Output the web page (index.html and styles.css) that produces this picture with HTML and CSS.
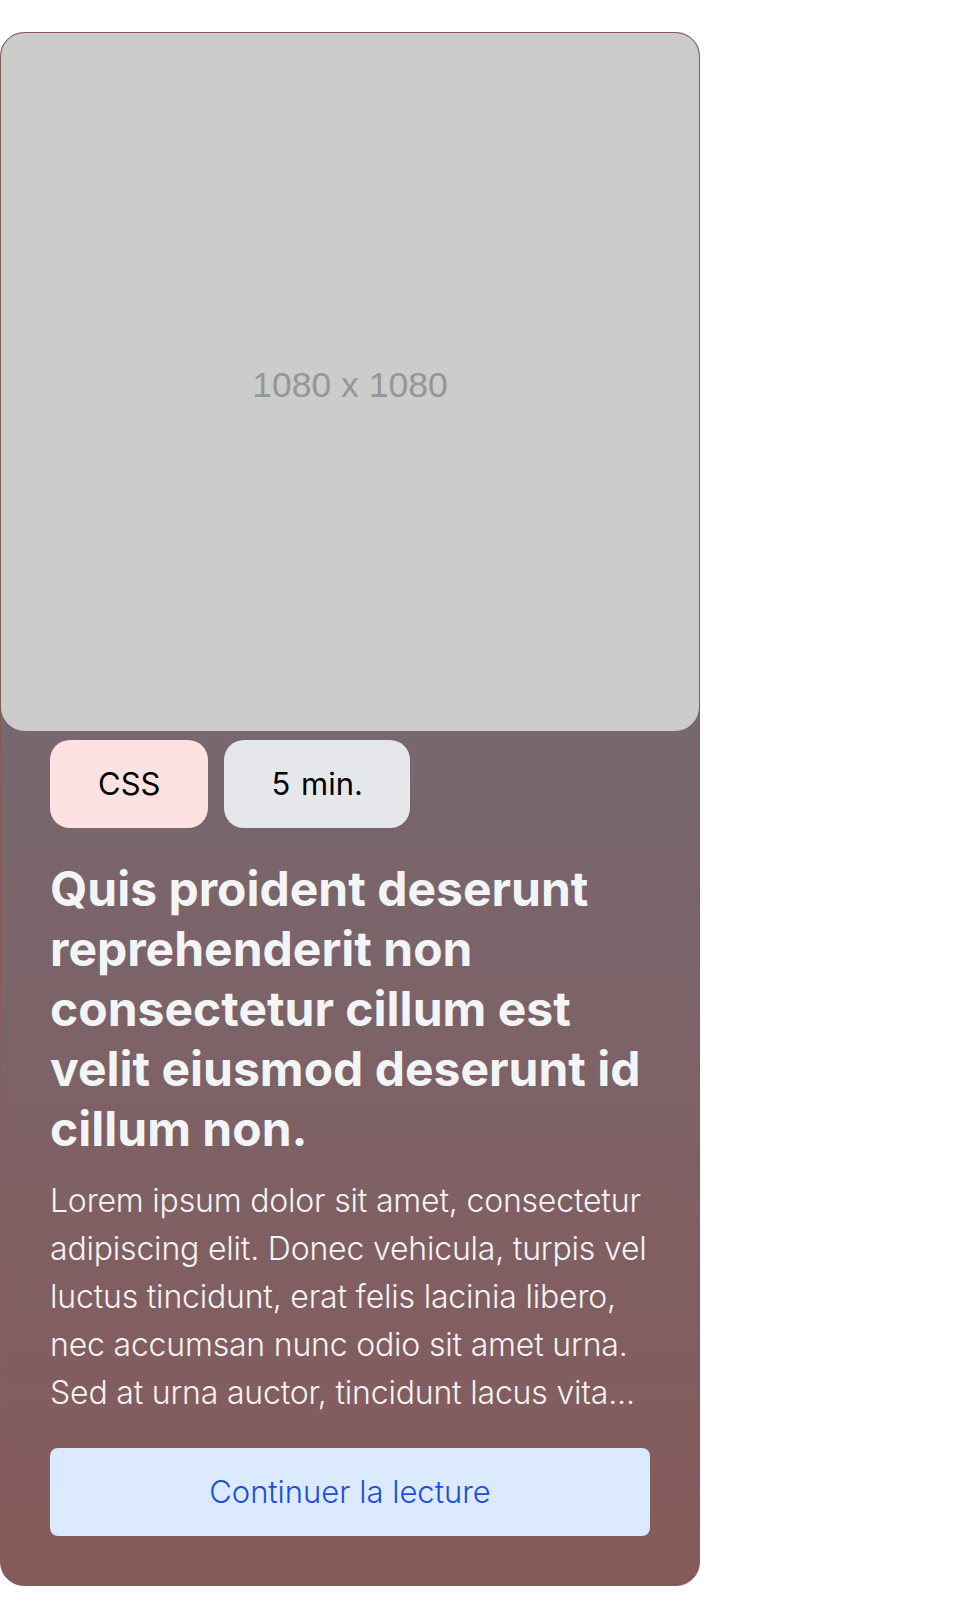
FILE: index.html
```html
<!DOCTYPE html>
<html lang="fr">
<head>
<meta charset="utf-8">
<title>Article</title>
<link rel="stylesheet" href="styles.css">
</head>
<body>
<article class="card">
  <div class="cover"><span class="cover-label">1080 x 1080</span></div>
  <div class="card-body">
    <div class="tags">
      <span class="tag tag-red">CSS</span>
      <span class="tag tag-gray">5 min.</span>
    </div>
    <h2 class="title">Quis proident deserunt reprehenderit non consectetur cillum est velit eiusmod deserunt id cillum non.</h2>
    <p class="excerpt">Lorem ipsum dolor sit amet, consectetur adipiscing elit. Donec vehicula, turpis vel luctus tincidunt, erat felis lacinia libero, nec accumsan nunc odio sit amet urna. Sed at urna auctor, tincidunt lacus vita...</p>
    <a class="btn" href="#">Continuer la lecture</a>
  </div>
</article>
</body>
</html>
```
FILE: styles.css
```css
* { box-sizing: border-box; }
html, body { margin: 0; padding: 0; background: #ffffff; }
body {
  font-family: Inter, "Noto Sans", sans-serif;
  padding-top: 32px;
}
.card {
  width: 700px;
  border: 1px solid #875a5a;
  border-radius: 24px;
  background: linear-gradient(180deg, #6b7280 0%, #865a5a 100%);
  overflow: hidden;
}
.cover {
  width: 100%;
  aspect-ratio: 1 / 1;
  background: #cccccc;
  border-radius: 23px 23px 24px 24px;
  display: flex;
  align-items: center;
  justify-content: center;
  padding-top: 6px;
}
.cover-label {
  font-family: "Liberation Sans", Arial, sans-serif;
  font-size: 35.5px;
  color: #969696;
}
.card-body {
  padding: 9px 49px 49px;
}
.tags {
  display: flex;
  gap: 16px;
}
.tag {
  display: inline-block;
  font-size: 31px;
  line-height: 48px;
  padding: 20px 48px;
  border-radius: 20px;
  color: #000000;
}
.tag-red { background: #fee2e2; }
.tag-gray { background: #e5e7eb; padding: 20px 47px; word-spacing: 2px; }
.title {
  margin: 31px 0 0;
  font-size: 48px;
  line-height: 60px;
  font-weight: 700;
  color: #f3f4f6;
}
.excerpt {
  margin: 18px 0 0;
  font-size: 32px;
  line-height: 48px;
  font-weight: 300;
  letter-spacing: -0.006em;
  color: #f3f4f6;
}
.btn {
  display: block;
  margin-top: 31px;
  padding: 20px;
  font-size: 31px;
  line-height: 48px;
  font-weight: 300;
  text-align: center;
  text-decoration: none;
  color: #1d4ed8;
  background: #dbeafe;
  border-radius: 8px;
}
```
